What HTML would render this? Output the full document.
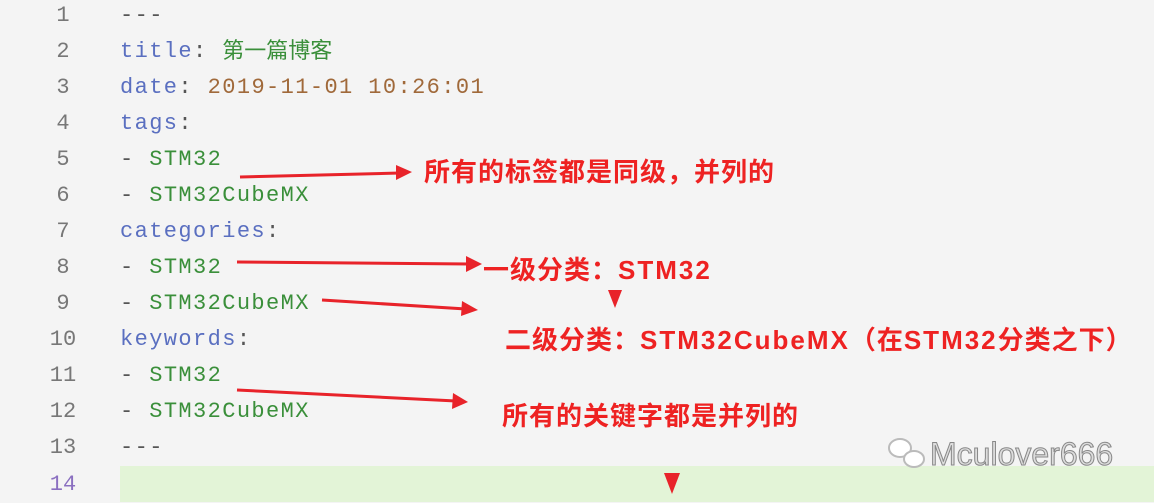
<!DOCTYPE html>
<html><head><meta charset="utf-8"><style>
body{margin:0;width:1154px;height:502px;background:#f4f4f4;overflow:hidden;position:relative;font-family:"Liberation Mono","Noto Sans CJK SC",monospace}
.ln{position:absolute;left:32px;width:62px;text-align:center;font-size:22px;color:#777;line-height:36px;height:36px}
.cd{position:absolute;left:120px;font-size:22px;letter-spacing:1.4px;line-height:36px;height:36px;color:#555;white-space:pre}
.k{color:#5a6fc0}.g{color:#3a8f3a}.d{color:#a0693a}
.cj{font-family:"Noto Sans CJK SC",sans-serif;letter-spacing:0;line-height:20px;display:inline-block;vertical-align:top;margin-top:5px}
.r{position:absolute;color:#ee2222;font-weight:bold;font-size:26px;letter-spacing:1px;font-family:"Liberation Sans","Noto Sans CJK SC",sans-serif;white-space:nowrap;line-height:1}
.r b{letter-spacing:2px}
</style></head><body>
<div style="position:absolute;left:120px;top:466px;width:1034px;height:36px;background:#e3f4d7"></div>
<div class="ln" style="top:-2px">1</div><div class="cd" style="top:-2px">---</div>
<div class="ln" style="top:34px">2</div><div class="cd" style="top:34px"><span class="k">title</span>: <span class="g cj">第一篇博客</span></div>
<div class="ln" style="top:70px">3</div><div class="cd" style="top:70px"><span class="k">date</span>: <span class="d">2019-11-01 10:26:01</span></div>
<div class="ln" style="top:106px">4</div><div class="cd" style="top:106px"><span class="k">tags</span>:</div>
<div class="ln" style="top:142px">5</div><div class="cd" style="top:142px">- <span class="g">STM32</span></div>
<div class="ln" style="top:178px">6</div><div class="cd" style="top:178px">- <span class="g">STM32CubeMX</span></div>
<div class="ln" style="top:214px">7</div><div class="cd" style="top:214px"><span class="k">categories</span>:</div>
<div class="ln" style="top:250px">8</div><div class="cd" style="top:250px">- <span class="g">STM32</span></div>
<div class="ln" style="top:286px">9</div><div class="cd" style="top:286px">- <span class="g">STM32CubeMX</span></div>
<div class="ln" style="top:322px">10</div><div class="cd" style="top:322px"><span class="k">keywords</span>:</div>
<div class="ln" style="top:358px">11</div><div class="cd" style="top:358px">- <span class="g">STM32</span></div>
<div class="ln" style="top:394px">12</div><div class="cd" style="top:394px">- <span class="g">STM32CubeMX</span></div>
<div class="ln" style="top:430px">13</div><div class="cd" style="top:430px">---</div>
<div class="ln" style="top:467px;color:#8a6fc0">14</div>
<svg width="1154" height="502" style="position:absolute;left:0;top:0">
<g stroke="#e8232a" stroke-width="3" fill="#e8232a">
<line x1="240" y1="177" x2="400" y2="173"/><polygon points="396,165 412,172 396,180" stroke="none"/>
<line x1="237" y1="262" x2="470" y2="264"/><polygon points="466,256 482,264 466,272" stroke="none"/>
<line x1="322" y1="300" x2="466" y2="309"/><polygon points="462,301 478,310 461,316" stroke="none"/>
<line x1="237" y1="390" x2="456" y2="401"/><polygon points="453,393 468,402 452,409" stroke="none"/>
<polygon points="608,290 622,290 615,308" stroke="none"/>
<polygon points="664,473 680,473 672,494" stroke="none"/>
</g>
<g fill="#fff" stroke="#bbb" stroke-width="2"><ellipse cx="900" cy="448" rx="11" ry="9"/><ellipse cx="914" cy="459" rx="10" ry="8"/></g>
</svg>
<div class="r" style="left:424px;top:159px">所有的标签都是同级，并列的</div>
<div class="r" style="left:483px;top:257px">一级分类：<b>STM32</b></div>
<div class="r" style="left:505px;top:327px">二级分类：<b>STM32CubeMX</b>（在<b>STM32</b>分类之下）</div>
<div class="r" style="left:502px;top:403px">所有的关键字都是并列的</div>
<div style="position:absolute;left:930px;top:438px;font-family:'Liberation Sans',sans-serif;font-size:32px;color:#ddd;-webkit-text-stroke:1px #888;line-height:1">Mculover666</div>
</body></html>
